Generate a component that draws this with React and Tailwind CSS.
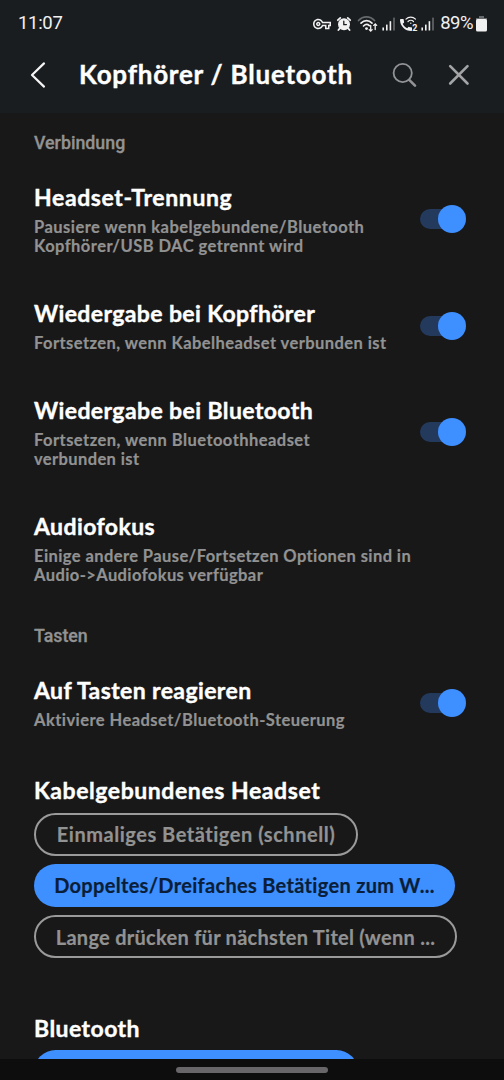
import React from "react";
import { MdOutlineVpnKey, MdCall } from "react-icons/md";

const AlarmIcon = () => (
  <svg width="16" height="16" viewBox="0 0 16 16" fill="none" stroke="#f1f1f1" strokeLinecap="round">
    <circle cx="8" cy="8.2" r="6" fill="#f1f1f1" stroke="none" />
    <path d="M1.8 4.2 4.3 1.9M14.2 4.2 11.7 1.9M3.6 12.6 2.4 14M12.4 12.6 13.6 14" strokeWidth="1.8" />
    <path d="M7.8 5.2V8.6H10.4" stroke="#1a1d20" strokeWidth="1.3" />
  </svg>
);

const WifiIcon = () => (
  <svg width="22" height="18" viewBox="0 0 22 18" fill="none" strokeLinecap="round" strokeWidth="1.7">
    <path d="M1.5 5.5C6 .6 13 .6 17.5 5.5" stroke="#666a6c" />
    <path d="M4 8.2C7.4 4.8 11.8 4.8 15 8.2M6.5 11C8.4 9.1 10.7 9.1 12.3 10.6" stroke="#f1f1f1" />
    <circle cx="9.5" cy="13.6" r="1.4" fill="#f1f1f1" />
    <path d="M13.7 10.5V16M12.2 14.6 13.7 16.1 15.2 14.6M18.2 14.5V9M16.7 10.4 18.2 8.9 19.7 10.4" stroke="#f1f1f1" strokeWidth="1.3" />
  </svg>
);

const SignalIcon = () => (
  <svg width="14" height="14" viewBox="0 0 14 14" fill="#f1f1f1">
    <rect x="0.4" y="10.5" width="1.6" height="3" />
    <rect x="4" y="7.6" width="1.6" height="5.9" />
    <rect x="7.6" y="4.2" width="1.6" height="9.3" />
    <rect x="11.2" y="0.6" width="1.6" height="12.9" fill="#666a6c" />
  </svg>
);

const CallIcon = () => (
  <span className="relative h-[18px] w-[18px]">
    <MdCall className="absolute top-[2px] left-[-2px] text-[16px]" />
    <svg className="absolute top-[1px] left-[5px]" width="12" height="9" viewBox="0 0 12 9" fill="none" stroke="#f1f1f1" strokeWidth="1.2" strokeLinecap="round">
      <path d="M1 3.2C3.7.5 7.8.5 10.5 3.2M3 5.5C4.7 3.8 7 3.8 8.5 5.5" />
      <circle cx="5.8" cy="7.3" r=".7" fill="#f1f1f1" stroke="none" />
    </svg>
    <span className="absolute top-[8px] left-[12px] text-[9px] leading-[10px] font-bold">2</span>
  </span>
);

const StatusBar = () => (
  <div className="flex h-[46px] items-center justify-between pt-px pr-[17px] pl-[18px] font-['Roboto',sans-serif] text-[18.5px] text-[#f1f1f1]">
    <span className="tracking-[-0.3px]">11:07</span>
    <div className="flex items-center">
      <MdOutlineVpnKey className="mr-[5px] text-[18px]" />
      <AlarmIcon />
      <span className="ml-[5px]"><WifiIcon /></span>
      <span className="mr-[4px] ml-[3px]"><SignalIcon /></span>
      <CallIcon />
      <span className="mr-[5px] ml-[3px]"><SignalIcon /></span>
      <span className="tracking-[-0.5px]">89%</span>
      <svg className="ml-[3px]" width="11" height="16" viewBox="0 0 11 16">
        <path d="M3 0h5v2h3v3H0V2h3z" fill="#666a6c" />
        <rect y="3" width="11" height="12.5" rx="1.5" fill="#f1f1f1" />
      </svg>
    </div>
  </div>
);

const Header = () => (
  <header className="h-[113px] bg-[#1a1d20]">
    <StatusBar />
    <div className="flex h-[58px] items-center">
      <svg className="ml-[29px]" width="18" height="28" viewBox="0 0 18 28" fill="none" stroke="#f5f5f5" strokeWidth="2.2" strokeLinecap="round" strokeLinejoin="round">
        <path d="M15 2.4 3 14 15 25.6" />
      </svg>
      <h1 className="ml-[32px] w-[311px] pb-[2px] text-[26px] font-bold tracking-[0.77px] whitespace-nowrap text-white [-webkit-text-stroke:0.4px]">
        Kopfhörer / Bluetooth
      </h1>
      <svg width="28" height="28" viewBox="0 0 28 28" fill="none" stroke="#929395" strokeLinecap="round">
        <circle cx="12.7" cy="12" r="9.1" strokeWidth="1.8" />
        <path d="M19.2 18.8 25 24.6" strokeWidth="2.6" />
      </svg>
      <svg className="ml-[29px]" width="24" height="24" viewBox="0 0 24 24" fill="none" stroke="#a3a4a5" strokeWidth="2.6" strokeLinecap="round">
        <path d="M3.2 3.2 20.5 20.5M20.5 3.2 3.2 20.5" />
      </svg>
    </div>
  </header>
);

const SectionLabel = ({ children, className }) => (
  <div className={`px-[34px] font-['Roboto',sans-serif] text-[17.8px] leading-[24px] font-medium text-[#929292] [-webkit-text-stroke:0.3px] ${className}`}>
    {children}
  </div>
);

const Toggle = () => (
  <button className="flex h-[28px] w-[46px] shrink-0 items-center">
    <span className="h-[20px] w-[38px] rounded-full bg-[#233a5d]" />
    <span className="-ml-[20px] h-[28px] w-[28px] shrink-0 rounded-full bg-[#3e8fff]" />
  </button>
);

const SettingRow = ({ title, lines, toggle, tracking }) => (
  <div className="flex items-center justify-between pr-[38px] pl-[34px]">
    <div className="pt-[22px] pb-[21.5px] whitespace-nowrap">
      <div className={`mb-[7px] text-[23px] leading-[28px] font-bold text-white [-webkit-text-stroke:0.4px] ${tracking}`}>{title}</div>
      {lines.map((line) => (
        <div key={line.text} className={`text-[16.5px] leading-[18.7px] font-bold text-[#929292] [-webkit-text-stroke:0.2px] ${line.tracking}`}>
          {line.text}
        </div>
      ))}
    </div>
    {toggle && <Toggle />}
  </div>
);

const Chip = ({ text, selected, className }) => (
  <button
    className={`flex h-[43px] items-center justify-center rounded-full text-[20px] font-bold whitespace-nowrap [-webkit-text-stroke:0.2px] ${
      selected ? "bg-[#3e8fff] text-[#0b1e38]" : "border-2 border-[#9a9a9a] text-[#929292]"
    } ${className}`}
  >
    {text}
  </button>
);

const connectionRows = [
  {
    title: "Headset-Trennung",
    tracking: "tracking-[0.62px]",
    toggle: true,
    lines: [
      { text: "Pausiere wenn kabelgebundene/Bluetooth", tracking: "tracking-[0.46px]" },
      { text: "Kopfhörer/USB DAC getrennt wird", tracking: "tracking-[0.45px]" },
    ],
  },
  {
    title: "Wiedergabe bei Kopfhörer",
    tracking: "tracking-[0.38px]",
    toggle: true,
    lines: [{ text: "Fortsetzen, wenn Kabelheadset verbunden ist", tracking: "tracking-[0.43px]" }],
  },
  {
    title: "Wiedergabe bei Bluetooth",
    tracking: "tracking-[0.4px]",
    toggle: true,
    lines: [
      { text: "Fortsetzen, wenn Bluetoothheadset", tracking: "tracking-[0.45px]" },
      { text: "verbunden ist", tracking: "tracking-[0.38px]" },
    ],
  },
  {
    title: "Audiofokus",
    tracking: "tracking-[0.4px]",
    lines: [
      { text: "Einige andere Pause/Fortsetzen Optionen sind in", tracking: "tracking-[0.41px]" },
      { text: "Audio->Audiofokus verfügbar", tracking: "tracking-[0.41px]" },
    ],
  },
];

const App = () => {
  return (
    <div className="flex h-[1080px] w-[504px] flex-col overflow-hidden bg-[#181818] font-['Lato',sans-serif]">
      <Header />
      <main className="min-h-0 flex-1 overflow-hidden">
        <SectionLabel className="h-[48px] pt-[18px]">Verbindung</SectionLabel>
        {connectionRows.map((row) => (
          <SettingRow key={row.title} {...row} />
        ))}
        <SectionLabel className="h-[48px] pt-[18px]">Tasten</SectionLabel>
        <SettingRow
          title="Auf Tasten reagieren"
          tracking="tracking-[0.39px]"
          toggle
          lines={[{ text: "Aktiviere Headset/Bluetooth-Steuerung", tracking: "tracking-[0.45px]" }]}
        />
        <div className="flex flex-col items-start gap-[8.2px] px-[34px] pt-[24px]">
          <h2 className="-mb-[0.7px] text-[23px] leading-[30px] font-bold tracking-[0.57px] text-white [-webkit-text-stroke:0.4px]">Kabelgebundenes Headset</h2>
          <Chip className="w-[324px] tracking-[0.53px]" text="Einmaliges Betätigen (schnell)" />
          <Chip className="w-[421px] tracking-[0.31px]" text="Doppeltes/Dreifaches Betätigen zum W..." selected />
          <Chip className="w-[423px] tracking-[0.28px]" text="Lange drücken für nächsten Titel (wenn ..." />
        </div>
        <div className="flex flex-col items-start gap-[7.5px] px-[34px] pt-[54.5px]">
          <h2 className="text-[23px] leading-[30px] font-bold tracking-[0.45px] text-white [-webkit-text-stroke:0.4px]">Bluetooth</h2>
          <Chip className="w-[324px]" selected />
        </div>
      </main>
      <footer className="flex h-[21px] items-center justify-center bg-[#0d0d0d]">
        <div className="h-[6px] w-[152px] rounded-full bg-[#686668]" />
      </footer>
    </div>
  );
};

export default App;
